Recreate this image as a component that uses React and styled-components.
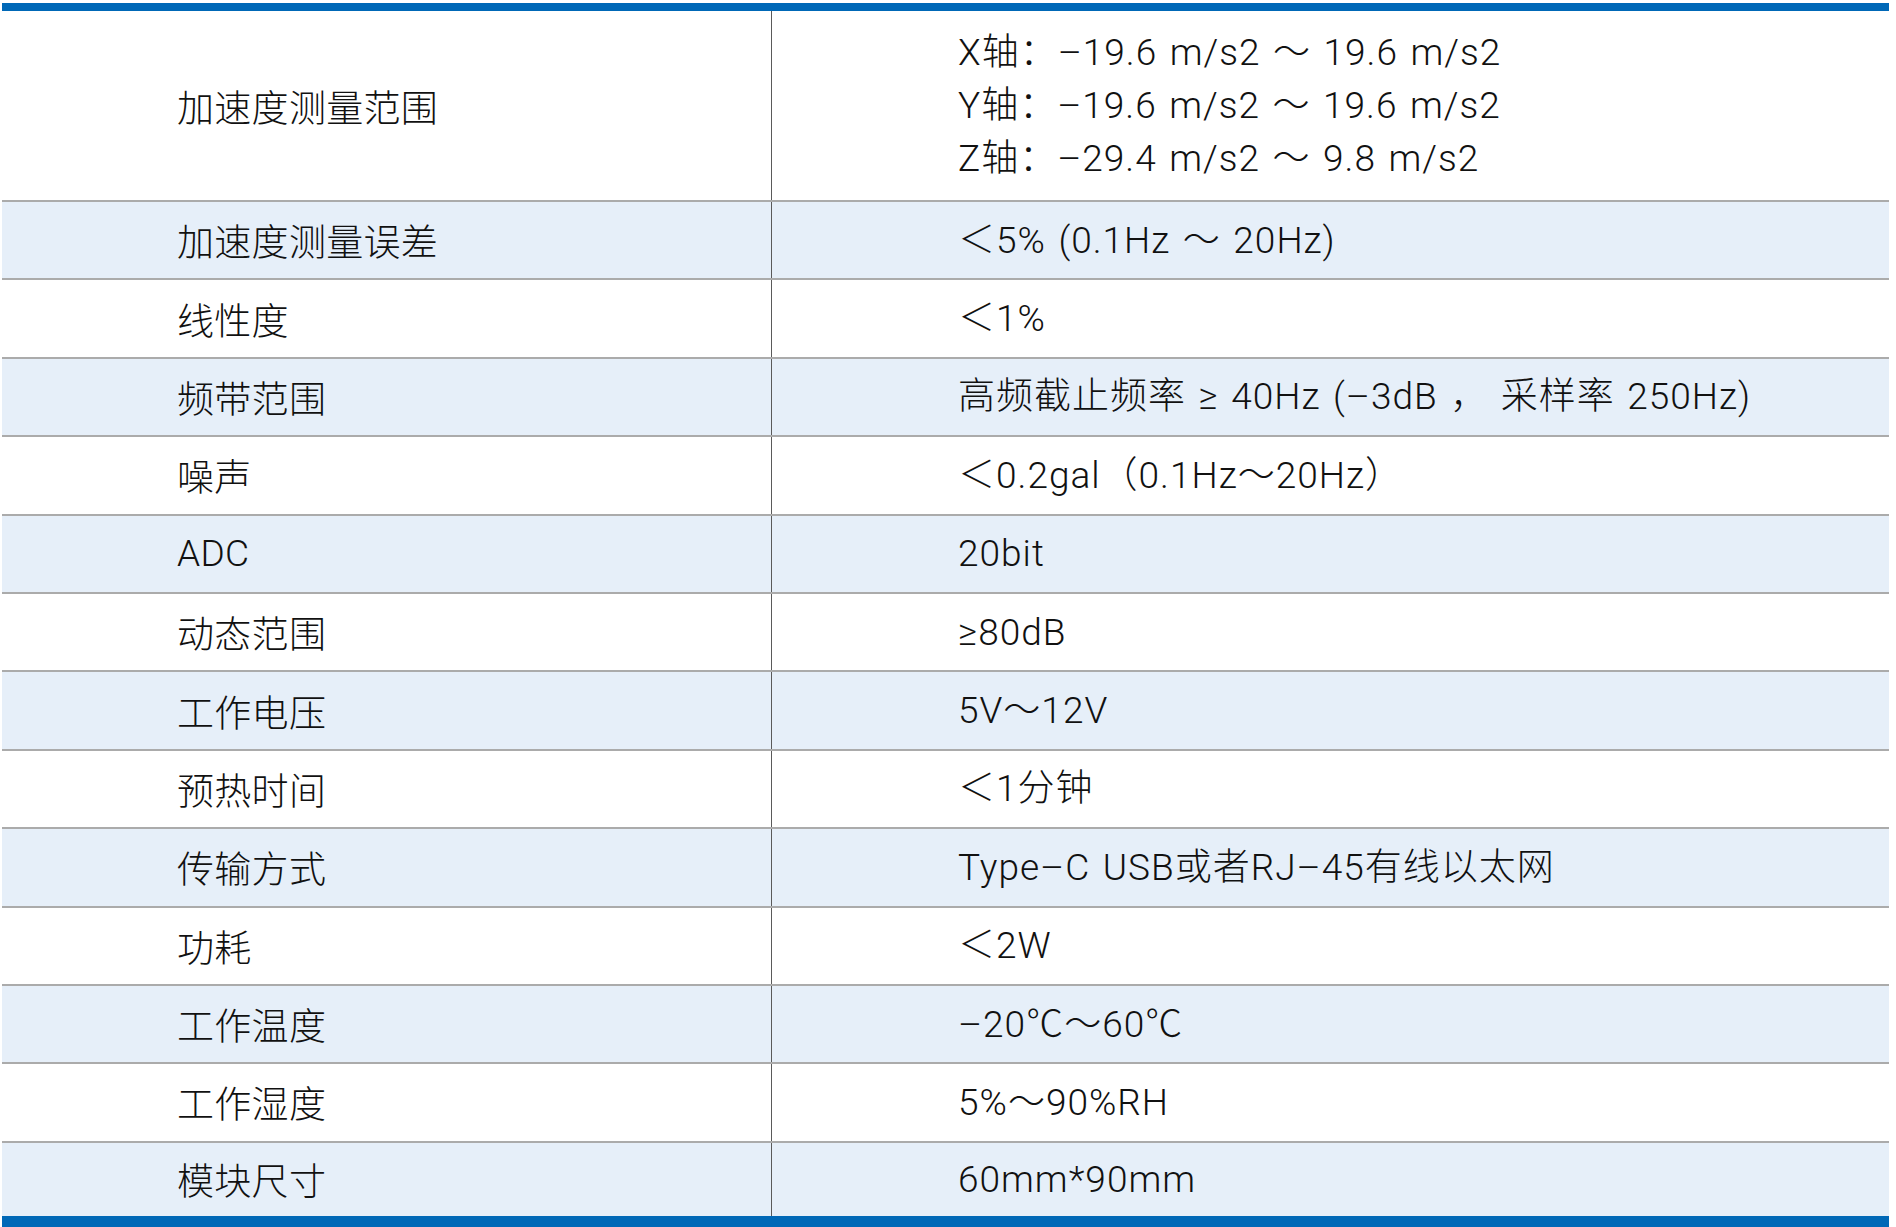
import React from "react";
import styled, { createGlobalStyle } from "styled-components";

const specs = [
  {
    label: "加速度测量范围",
    value: [
      "X轴：–19.6 m/s2 ～ 19.6 m/s2",
      "Y轴：–19.6 m/s2 ～ 19.6 m/s2",
      "Z轴：–29.4 m/s2 ～ 9.8 m/s2",
    ],
    tall: true,
  },
  { label: "加速度测量误差", value: ["＜5% (0.1Hz ～ 20Hz)"] },
  { label: "线性度", value: ["＜1%"] },
  { label: "频带范围", value: ["高频截止频率 ≥ 40Hz (–3dB ， 采样率 250Hz)"] },
  { label: "噪声", value: ["＜0.2gal（0.1Hz～20Hz）"] },
  { label: "ADC", value: ["20bit"] },
  { label: "动态范围", value: ["≥80dB"] },
  { label: "工作电压", value: ["5V～12V"] },
  { label: "预热时间", value: ["＜1分钟"] },
  { label: "传输方式", value: ["Type–C USB或者RJ–45有线以太网"] },
  { label: "功耗", value: ["＜2W"] },
  { label: "工作温度", value: ["–20℃～60℃"] },
  { label: "工作湿度", value: ["5%～90%RH"] },
  { label: "模块尺寸", value: ["60mm*90mm"], last: true },
];

const GlobalStyle = createGlobalStyle`
  body {
    margin: 0;
    background: #ffffff;
    font-family: "Roboto", "Noto Sans CJK SC", sans-serif;
    font-weight: 300;
    color: #111111;
  }
`;

const Page = styled.div`
  padding: 3px 7px 0 2px;
`;

const Table = styled.div`
  border-top: 8px solid #0068b7;
  border-bottom: 13px solid #0068b7;
`;

const Row = styled.div`
  display: grid;
  grid-template-columns: 770px 1fr;
  height: ${(props) => props.$height}px;
  background: ${(props) => (props.$shaded ? "#e6eff9" : "#ffffff")};
  border-bottom: ${(props) => (props.$last ? "none" : "2px solid #ababab")};
`;

const Label = styled.div`
  display: flex;
  align-items: center;
  padding-left: 175px;
  border-right: 1px solid #5a5a5a;
  font-size: 37px;
  letter-spacing: 0.3px;
`;

const Value = styled.div`
  display: flex;
  flex-direction: column;
  justify-content: center;
  padding-left: 186px;
  font-size: 37px;
  line-height: 53px;
  letter-spacing: 1px;
  word-spacing: 2.5px;
`;

const App = () => {
  return (
    <>
      <GlobalStyle />
      <Page>
        <Table>
          {specs.map((el, i) => (
            <Row
              key={el.label}
              $shaded={i % 2 === 1}
              $last={el.last}
              $height={el.tall ? 189 : el.last ? 73 : 76.4}
            >
              <Label>{el.label}</Label>
              <Value>
                {el.value.map((line) => (
                  <div key={line}>{line}</div>
                ))}
              </Value>
            </Row>
          ))}
        </Table>
      </Page>
    </>
  );
};

export default App;
